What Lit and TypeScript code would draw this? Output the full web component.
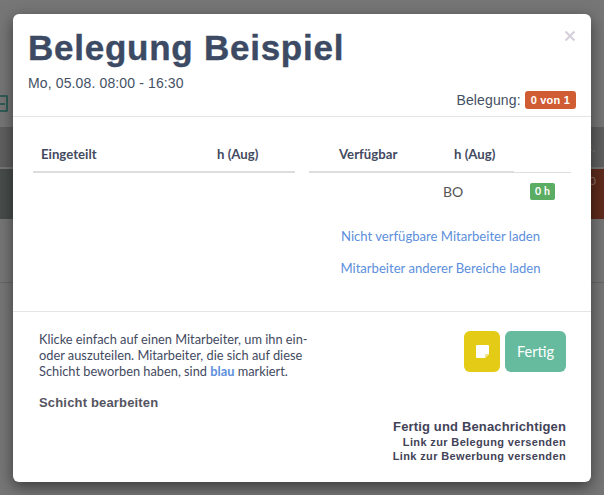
import { LitElement, html, css } from "lit";
import { customElement } from "lit/decorators.js";

@customElement("app-root")
export class AppRoot extends LitElement {
  static styles = css`
    :host { display: block; width: 604px; height: 495px; position: relative; overflow: hidden; background: #767676; font-family: "Liberation Sans", Arial, sans-serif; color: #3c4858; }
    .bg { height: 495px; display: flex; flex-direction: column; }
    .bg-top { height: 127px; flex: none; padding: 95px 0 0; box-sizing: border-box; }
    .bg-icon { width: 8px; height: 17px; border: 2px solid #2f5c55; border-left: 0; box-sizing: border-box; border-radius: 0 2px 2px 0; display: flex; align-items: center; }
    .bg-icon::before { content: ""; width: 5px; height: 2px; background: #2f5c55; }
    .bg-head { height: 40px; background: #5f5f5f; flex: none; display: flex; justify-content: flex-end; align-items: center; }
    .bg-head span { font: 12px "Lato", sans-serif; color: #7d7d7d; margin-right: 9px; }
    .bg-row { height: 50px; margin-top: 2px; flex: none; display: flex; justify-content: space-between; }
    .bg-left { width: 50px; background: #474d4b; }
    .bg-right { width: 50px; background: #5e2b1c; text-align: right; font: 12px "Lato", sans-serif; color: #8c7068; padding: 4px 8px 0 0; box-sizing: border-box; }
    .bg-line { height: 1px; background: #666; margin-top: 63px; flex: none; }

    .modal { position: absolute; left: 13px; top: 14px; width: 578px; height: 468px; box-sizing: border-box; background: #fff; border-radius: 6px; box-shadow: 0 5px 15px rgba(0,0,0,.5); display: flex; flex-direction: column; }
    .header { height: 103px; flex: none; box-sizing: border-box; border-bottom: 1px solid #e5e5e5; padding: 15px 15px 0; position: relative; }
    h1 { margin: 0; font: bold 35px/38px "Liberation Sans", Arial, sans-serif; letter-spacing: 0.75px; color: #3c4a64; -webkit-text-stroke: 0.4px #3c4a64; }
    .sub { font-size: 14px; line-height: 20px; margin-top: 6px; letter-spacing: .13px; color: #445064; }
    .close { position: absolute; right: 15px; top: 16px; width: 12px; height: 12px; }
    .occ { position: absolute; right: 15px; bottom: 7px; display: flex; align-items: center; gap: 4px; font-size: 14px; letter-spacing: .13px; color: #445064; }
    .badge-red { background: #d05c34; color: #fff; font: bold 11px/18px "Liberation Sans", sans-serif; letter-spacing: .2px; padding: 0 6px; border-radius: 3px; }

    .body { height: 195px; flex: none; box-sizing: border-box; border-bottom: 1px solid #e5e5e5; padding: 20px 20px 0; display: flex; gap: 14px; font-family: "Lato", sans-serif; font-size: 13.2px; }
    .th { height: 36px; box-sizing: border-box; display: flex; align-items: center; font-weight: bold; color: #434a5f; }
    .left { width: 262px; flex: none; }
    .left .th { border-bottom: 2px solid #ddd; padding-left: 8px; }
    .left .th span:first-child { width: 176px; }
    .right { width: 262px; flex: none; }
    .rhead { display: flex; }
    .rhead .th { width: 205px; border-bottom: 2px solid #ddd; padding-left: 30px; }
    .rhead .th span:first-child { width: 115px; }
    .rhead .rest { flex: 1; border-bottom: 1px solid #ddd; }
    .row { height: 37px; display: flex; align-items: center; padding-left: 134px; color: #555; font-size: 14px; }
    .row span:first-child { width: 87px; }
    .badge-green { background: #5cad64; color: #fff; font: bold 10.5px/17px "Lato", sans-serif; letter-spacing: .2px; padding: 0 5px; border-radius: 2px; }
    .link { color: #5c8fdc; font-size: 13.1px; text-align: center; padding-left: 1px; margin-top: 16px; line-height: 20px; }
    .link + .link { margin-top: 12px; }

    .footer { flex: 1; position: relative; padding: 16px 25px 0 26px; display: flex; justify-content: space-between; font-family: "Lato", sans-serif; }
    .help { width: 290px; font-size: 12.8px; line-height: 16px; color: #434a5f; padding-top: 3px; }
    .help b { font-weight: bold; color: #5c8fdc; }
    .edit { margin-top: 16px; font: bold 13px/16px "Liberation Sans", sans-serif; letter-spacing: .17px; color: #54545f; }
    .side { display: flex; flex-direction: column; align-items: flex-end; }
    .btns { display: flex; gap: 5px; margin-top: 3px; }
    .btn { height: 41px; border-radius: 6px; display: flex; align-items: center; justify-content: center; }
    .note { width: 36px; background: #e3cb16; }
    .done { width: 61px; background: #66bb9f; color: #fff; font-size: 14.5px; }
    .links { margin-top: 47px; text-align: right; font-family: "Liberation Sans", sans-serif; font-weight: bold; color: #434358; }
    .links div { font-size: 11px; line-height: 14px; letter-spacing: .36px; }
    .links div.big { font-size: 13px; line-height: 15px; letter-spacing: .15px; margin-bottom: 1px; }
  `;

  render() {
    return html`
      <div class="bg">
        <div class="bg-top"><span class="bg-icon"></span></div>
        <div class="bg-head"><span>B.</span></div>
        <div class="bg-row"><div class="bg-left"></div><div class="bg-right">0</div></div>
        <div class="bg-line"></div>
      </div>
      <div class="modal">
        <div class="header">
          <h1>Belegung Beispiel</h1>
          <div class="sub">Mo, 05.08. 08:00 - 16:30</div>
          <svg class="close" viewBox="0 0 12 12"><path d="M1.5 1.5l9 9M10.5 1.5l-9 9" stroke="#d6d0dc" stroke-width="2.2" fill="none"/></svg>
          <div class="occ">Belegung: <span class="badge-red">0 von 1</span></div>
        </div>
        <div class="body">
          <div class="left">
            <div class="th"><span>Eingeteilt</span><span>h (Aug)</span></div>
          </div>
          <div class="right">
            <div class="rhead">
              <div class="th"><span>Verfügbar</span><span>h (Aug)</span></div>
              <div class="rest"></div>
            </div>
            <div class="row"><span>BO</span><span class="badge-green">0 h</span></div>
            <div class="link">Nicht verfügbare Mitarbeiter laden</div>
            <div class="link">Mitarbeiter anderer Bereiche laden</div>
          </div>
        </div>
        <div class="footer">
          <div>
            <div class="help">Klicke einfach auf einen Mitarbeiter, um ihn ein-<br>oder auszuteilen. Mitarbeiter, die sich auf diese<br>Schicht beworben haben, sind <b>blau</b> markiert.</div>
            <div class="edit">Schicht bearbeiten</div>
          </div>
          <div class="side">
            <div class="btns">
              <div class="btn note"><svg width="13" height="13" viewBox="0 0 13 13"><path d="M0 1a1 1 0 0 1 1-1h11a1 1 0 0 1 1 1v8l-4 4H1a1 1 0 0 1-1-1z" fill="#fff"/><path d="M9 13v-3a1 1 0 0 1 1-1h3z" fill="#f1e48a"/></svg></div>
              <div class="btn done">Fertig</div>
            </div>
            <div class="links">
              <div class="big">Fertig und Benachrichtigen</div>
              <div>Link zur Belegung versenden</div>
              <div>Link zur Bewerbung versenden</div>
            </div>
          </div>
        </div>
      </div>
    `;
  }
}
